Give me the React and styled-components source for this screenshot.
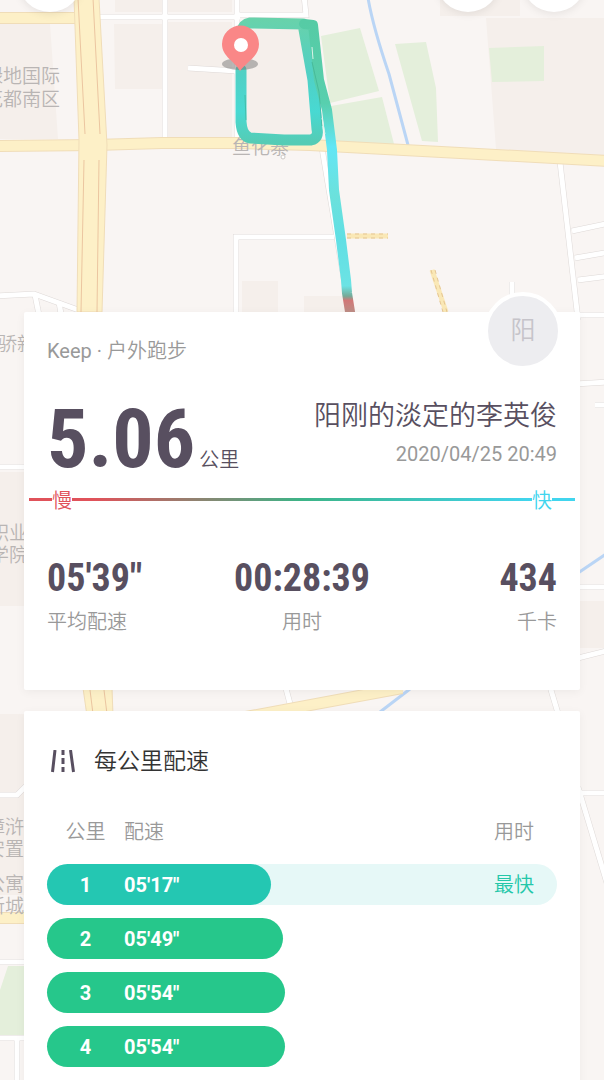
import React from 'react';
import styled, { createGlobalStyle } from 'styled-components';

const GlobalStyle = createGlobalStyle`
  * { box-sizing: border-box; }
  body {
    margin: 0;
    background: #f9f5f3;
    font-family: Roboto, "Noto Sans CJK SC DemiLight", "Noto Sans CJK SC", sans-serif;
    font-weight: 350;
    color: #584f60;
  }
`;

const Page = styled.div`
  position: relative;
  height: 100vh;
  overflow: hidden auto;
  scrollbar-width: none;
`;

const MapCanvas = styled.svg`
  position: absolute;
  top: 0;
  left: 0;
  width: 100%;
  height: 100%;
  text {
    font-size: 19px;
    fill: #b9b5b4;
  }
`;

const Content = styled.div`
  position: relative;
  padding: 0 24px 24px;
`;

const Toolbar = styled.header`
  display: flex;
  gap: 22px;
  height: 312px;
  margin: 0 -6px;
`;

const RoundButton = styled.button`
  width: 64px;
  height: 64px;
  margin: -52px ${(p) => (p.$leading ? 'auto' : '0')} 0 0;
  padding: 0;
  border: 0;
  border-radius: 50%;
  background: #fff;
  box-shadow: 0 2px 8px rgba(0, 0, 0, 0.08);
`;

const Card = styled.section`
  position: relative;
  margin-bottom: 21px;
  padding: 27px 23px;
  background: #fff;
  border-radius: 2px;
  box-shadow: 0 2px 10px rgba(0, 0, 0, 0.05);
`;

const SummaryCard = styled(Card)`
  min-height: 378px;
`;

const Avatar = styled.div`
  position: absolute;
  top: -20px;
  right: 18px;
  width: 78px;
  height: 78px;
  display: grid;
  place-items: center;
  border: 4px solid #fff;
  border-radius: 50%;
  background: #ededf0;
  color: #c6c4ca;
  font-size: 25px;
  line-height: 36px;
`;

const Source = styled.p`
  margin: 0;
  font-size: 20px;
  font-weight: 400;
  line-height: 24px;
  color: #999;
`;

const Headline = styled.div`
  display: flex;
  justify-content: space-between;
  height: 124px;
`;

const Distance = styled.div`
  display: flex;
  align-items: baseline;
  gap: 4px;
  padding-top: 8px;
  font-size: 20px;
  line-height: 24px;
`;

const Digits = styled.strong`
  font-family: "Roboto Condensed", Roboto, sans-serif;
  font-weight: 700;
  font-size: ${(p) => (p.$large ? '82px' : '38px')};
  line-height: ${(p) => (p.$large ? '136px' : '48px')};
`;

const Runner = styled.div`
  padding-top: 35px;
  text-align: right;
`;

const Name = styled.h1`
  margin: 0;
  font-size: 27px;
  font-weight: 350;
  line-height: 36px;
`;

const DateText = styled.time`
  display: block;
  margin-top: 8px;
  font-size: 20px;
  font-weight: 400;
  line-height: 24px;
  color: #999;
`;

const PaceScale = styled.div`
  display: flex;
  justify-content: space-between;
  margin: 0 -18px;
  padding: 0 23px;
  font-size: 20px;
  line-height: 28px;
  background: linear-gradient(90deg, #e0525a, #e0525a 12%, #3cb487 50%, #41d5ee 92%) center 11px / 100% 3px no-repeat;
`;

const ScaleEnd = styled.span`
  background: #fff;
  font-weight: 400;
  color: ${(p) => p.$color};
`;

const Stats = styled.dl`
  display: grid;
  grid-template-columns: repeat(3, 1fr);
  margin: 39px 0 0;
`;

const Stat = styled.div`
  display: flex;
  flex-direction: column-reverse;
  text-align: ${(p) => p.$align};
`;

const StatLabel = styled.dt`
  font-size: 20px;
  line-height: 24px;
  color: #999;
`;

const StatValue = styled.dd`
  margin: 0;
  line-height: 48px;
`;

const SectionTitle = styled.h2`
  display: flex;
  align-items: center;
  gap: 17px;
  margin: 0;
  padding: 6px 0 0 3px;
  font-size: 23px;
  font-weight: 350;
  line-height: 36px;
  color: #333;
`;

const PaceTable = styled.table`
  display: block;
  margin-top: 38px;
  font-size: 20px;
`;

const TableHead = styled.thead`
  display: block;
`;

const TableBody = styled.tbody`
  display: grid;
  gap: 13px;
  margin-top: 18px;
`;

const Row = styled.tr`
  position: relative;
  display: grid;
  grid-template-columns: 77px 1fr auto;
  padding-right: 23px;
  line-height: ${(p) => (p.$head ? '28px' : '42px')};
  height: ${(p) => (p.$head ? '28px' : '41px')};
  border-radius: 21px;
  background: ${(p) => (p.$best ? '#e6f8f7' : 'transparent')};
`;

const Heading = styled.th`
  padding: 0;
  font-weight: 350;
  color: #999;
  text-align: ${(p) => p.$align || 'left'};
`;

const Cell = styled.td`
  position: relative;
  padding: 0;
  font-weight: 700;
  color: #fff;
  text-align: ${(p) => p.$align || 'left'};
`;

const BarCell = styled(Cell)`
  position: static;
`;

const Bar = styled.span`
  position: absolute;
  inset: 0 auto 0 0;
  border-radius: 21px;
  background: ${(p) => (p.$best ? '#24c7b2' : '#26c78b')};
`;

const Kilometre = styled.span`
  position: relative;
`;

const BestCell = styled(Cell)`
  font-weight: 400;
  color: #24c7a9;
`;

const paces = [
  { km: 1, pace: '05\'17"', share: 44, best: true },
  { km: 2, pace: '05\'49"', share: 46.3 },
  { km: 3, pace: '05\'54"', share: 46.7 },
  { km: 4, pace: '05\'54"', share: 46.7 },
];

const stats = [
  { label: '平均配速', value: '05\'39"', align: 'left' },
  { label: '用时', value: '00:28:39', align: 'center' },
  { label: '千卡', value: '434', align: 'right' },
];

const localRoads = [
  'M96 17H240', 'M165 -5V140', 'M237 -5V140', 'M188 68L237 71', 'M237 15H306L304 -5',
  'M236 320V237H334', 'M322 148L350 315', 'M560 162L578 320',
  'M572 231L610 223', 'M575 258L610 252', 'M578 280L610 276', 'M572 315H610',
  'M-5 296L34 294L84 312', 'M35 295L40 320', 'M59 302L62 320', 'M512 282V310',
  'M-5 467H40', 'M575 384L610 382', 'M595 405H610',
  'M570 587H610', 'M570 660L610 650', 'M285 685L293 715', 'M548 680L560 720',
  'M-5 795H17L30 782', 'M575 793H610', 'M578 787L612 900', 'M-5 962H30', 'M-5 1038H30', 'M17 1040V1090',
];

function RouteMap() {
  return (
    <MapCanvas viewBox="0 0 604 1080" preserveAspectRatio="xMidYMin slice" aria-hidden="true">
      <defs>
        <linearGradient id="loop" x1="0" y1="20" x2="0" y2="142" gradientUnits="userSpaceOnUse">
          <stop offset="0" stopColor="#68d2ab" />
          <stop offset="0.45" stopColor="#50d0c5" />
          <stop offset="0.75" stopColor="#48d9d2" />
          <stop offset="1" stopColor="#55ccb5" />
        </linearGradient>
        <linearGradient id="tail" x1="0" y1="22" x2="0" y2="312" gradientUnits="userSpaceOnUse">
          <stop offset="0" stopColor="#56cba5" />
          <stop offset="0.28" stopColor="#58cfae" />
          <stop offset="0.43" stopColor="#62e6f5" />
          <stop offset="0.6" stopColor="#6be1dc" />
          <stop offset="0.75" stopColor="#60dfe4" />
          <stop offset="0.91" stopColor="#6ce3e4" />
          <stop offset="0.945" stopColor="#75aa98" />
          <stop offset="0.96" stopColor="#d17777" />
          <stop offset="1" stopColor="#bd8e86" />
        </linearGradient>
      </defs>
      <rect width="604" height="1080" fill="#f9f5f3" />
      <g fill="#f5efeb">
        <path d="M0 24H50L58 139H0zM115 0H162V12H115zM168 0H232V12H168zM114 24H162V89H115zM168 22H232V137H168zM240 24H315V137H240z" />
        <path d="M486 18H604V157L496 149zM440 0H520V16H440zM242 281H278V312H242zM304 296H345V312H304z" />
        <path d="M0 472H24V606H0zM0 714H24V895H0zM580 601H604V648H580z" />
      </g>
      <g fill="#e4efdb">
        <path d="M321 36L360 28L379 91L330 103zM331 106L382 97L394 144L333 143z" />
        <path d="M395 44L426 42L436 88L438 142L422 141zM489 48L544 46V81L492 82z" />
        <path d="M8 966H24V1036H0V990z" />
      </g>
      <path d="M368 -2Q373 27 389 74L408 145M578 573L606 554M380 712L410 689" fill="none" stroke="#bad5f5" strokeWidth="3" />
      <g fill="none">
        {localRoads.map((d) => <path key={d} d={d} stroke="#ded9d7" strokeWidth="6" />)}
        {localRoads.map((d) => <path key={d} d={d} stroke="#fff" strokeWidth="5" />)}
      </g>
      <g fill="none" stroke="#f0ddb8" strokeWidth="12">
        <path d="M-5 18H84M-5 146L95 145L162 143H236L310 145L460 153L610 161" />
        <path d="M-5 918H30M246 717L402 688" />
      </g>
      <g fill="none" stroke="#fdf0c7" strokeWidth="10">
        <path d="M-5 18H84M-5 146L95 145L162 143H236L310 145L460 153L610 161" />
        <path d="M-5 918H30M246 717L402 688" />
      </g>
      <path d="M74 -2L79 140L77 312H102L107 145L99 -2zM83 688L87 716H113L112 688z" fill="#fdf0c7" stroke="#f0ddb8" />
      <path d="M78 -2L85 134M93 -2L100 134M84 160L81 312M99 160L97 312M90 690L93 714M104 690L107 714" fill="none" stroke="#ebc5a0" />
      <path d="M347 236H388M432 270L446 312" fill="none" stroke="#fae8b6" strokeWidth="5" />
      <path d="M347 234H388M347 238H388M431 270L443 312M435 270L447 312" fill="none" stroke="#e5c592" strokeDasharray="4 4" />
      <text y="83">
        <tspan x="-16">绿地国际</tspan>
        <tspan x="-16" dy="23">花都南区</tspan>
      </text>
      <text x="232" y="154">鱼化寨</text>
      <text x="-2" y="351">骄新</text>
      <text y="540">
        <tspan x="-10">职业</tspan>
        <tspan x="-10" dy="22">学院</tspan>
      </text>
      <text y="834">
        <tspan x="-14">漳浒</tspan>
        <tspan x="-14" dy="22">安置</tspan>
        <tspan x="-14" dy="35">公寓</tspan>
        <tspan x="-14" dy="22">新城</tspan>
      </text>
      <circle cx="283" cy="157" r="2" fill="#fff" stroke="#ccc8c5" />
      <g fill="none" strokeLinecap="round" strokeLinejoin="round">
        <path d="M241 70L241 95L241 122Q242 136 250 138L284 140L311 140Q319 138 317 129L313 80L303 24L250 23Q243 24 241 33" stroke="url(#loop)" strokeWidth="11" />
        <path d="M304 24L313 25L319 80L327 110L332 150L334 190L341 240L346 280L347 293L351 318" stroke="url(#tail)" strokeWidth="10" />
      </g>
      <path d="M312 62L319 92L322 126M245 95L246 120" fill="none" stroke="#3ba98a" opacity="0.55" />
      <path d="M312 47L313 59M322 118L325 134" stroke="#dcf3e9" />
      <ellipse cx="240" cy="64" rx="18" ry="6" fill="#777" opacity="0.5" />
      <path d="M240 71C235 61 222 57 222 44A18 18 0 0 1 259 44C259 57 246 62 240 71z" fill="#fa8787" />
      <circle cx="241" cy="45" r="7" fill="#fff" />
    </MapCanvas>
  );
}

function RoadIcon() {
  return (
    <svg width="27" height="24" viewBox="0 0 27 24" fill="none" stroke="#584f60" strokeWidth="3" aria-hidden="true">
      <path d="M5 0L2.500 22M20.500 0L23.500 22M13 0V5M13 8V14M13 17V22" />
    </svg>
  );
}

export default function App() {
  return (
    <Page>
      <GlobalStyle />
      <RouteMap />
      <Content>
        <Toolbar>
          <RoundButton type="button" $leading />
          <RoundButton type="button" />
          <RoundButton type="button" />
        </Toolbar>
        <SummaryCard>
          <Avatar>阳</Avatar>
          <Source>Keep · 户外跑步</Source>
          <Headline>
            <Distance><Digits $large>5.06</Digits>公里</Distance>
            <Runner>
              <Name>阳刚的淡定的李英俊</Name>
              <DateText dateTime="2020-04-25T20:49">2020/04/25 20:49</DateText>
            </Runner>
          </Headline>
          <PaceScale>
            <ScaleEnd $color="#e0525a">慢</ScaleEnd>
            <ScaleEnd $color="#41d5ee">快</ScaleEnd>
          </PaceScale>
          <Stats>
            {stats.map((s) => (
              <Stat key={s.label} $align={s.align}>
                <StatLabel>{s.label}</StatLabel>
                <StatValue><Digits>{s.value}</Digits></StatValue>
              </Stat>
            ))}
          </Stats>
        </SummaryCard>
        <Card>
          <SectionTitle><RoadIcon />每公里配速</SectionTitle>
          <PaceTable>
            <TableHead>
              <Row $head>
                <Heading scope="col" $align="center">公里</Heading>
                <Heading scope="col">配速</Heading>
                <Heading scope="col">用时</Heading>
              </Row>
            </TableHead>
            <TableBody>
              {paces.map((p) => (
                <Row key={p.km} $best={p.best}>
                  <BarCell $align="center">
                    <Bar $best={p.best} style={{ width: `${p.share}%` }} />
                    <Kilometre>{p.km}</Kilometre>
                  </BarCell>
                  <Cell>{p.pace}</Cell>
                  <BestCell>{p.best ? '最快' : ''}</BestCell>
                </Row>
              ))}
            </TableBody>
          </PaceTable>
        </Card>
      </Content>
    </Page>
  );
}
